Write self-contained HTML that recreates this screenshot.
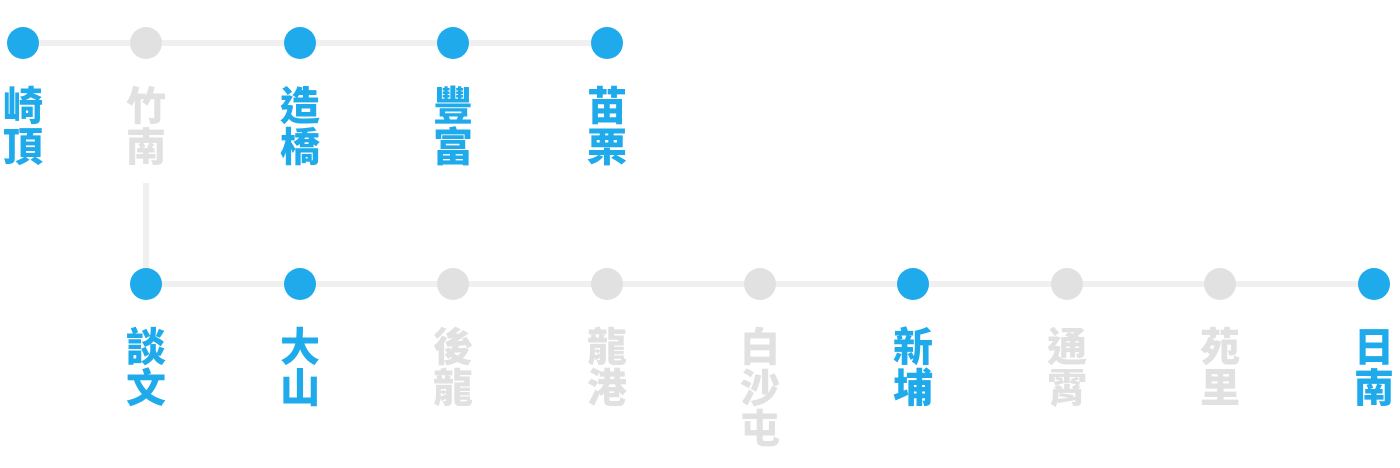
<!DOCTYPE html>
<html><head><meta charset="utf-8"><style>
body{margin:0;width:1400px;height:468px;background:#fff;position:relative;overflow:hidden;font-family:"Liberation Sans","Noto Sans CJK TC",sans-serif}
.l{position:absolute;background:#f0f0f0}
.d{position:absolute;width:32px;height:32px;border-radius:50%;margin:-16px 0 0 -16px}
.b{background:#1eaaeb;color:#1eaaeb}.g{background:#e1e1e1;color:#e1e1e1}
.t{position:absolute;width:60px;margin-left:-30px;text-align:center;font-size:40px;line-height:41px;font-weight:900;background:none}
</style></head><body>
<div class="l" style="left:23px;top:40px;width:584px;height:6px"></div>
<div class="l" style="left:143px;top:183px;width:6px;height:101px"></div>
<div class="l" style="left:146px;top:281px;width:1228px;height:6px"></div>

<div class="d b" style="left:23px;top:43px"></div>
<div class="d g" style="left:146px;top:43px"></div>
<div class="d b" style="left:300px;top:43px"></div>
<div class="d b" style="left:453px;top:43px"></div>
<div class="d b" style="left:607px;top:43px"></div>

<div class="t b" style="left:23px;top:87px;background:none">崎<br>頂</div>
<div class="t g" style="left:146px;top:87px;background:none">竹<br>南</div>
<div class="t b" style="left:300px;top:87px;background:none">造<br>橋</div>
<div class="t b" style="left:453px;top:87px;background:none">豐<br>富</div>
<div class="t b" style="left:607px;top:87px;background:none">苗<br>栗</div>

<div class="d b" style="left:146px;top:284px"></div>
<div class="d b" style="left:300px;top:284px"></div>
<div class="d g" style="left:453px;top:284px"></div>
<div class="d g" style="left:607px;top:284px"></div>
<div class="d g" style="left:760px;top:284px"></div>
<div class="d b" style="left:913px;top:284px"></div>
<div class="d g" style="left:1067px;top:284px"></div>
<div class="d g" style="left:1220px;top:284px"></div>
<div class="d b" style="left:1374px;top:284px"></div>

<div class="t b" style="left:146px;top:328px;background:none">談<br>文</div>
<div class="t b" style="left:300px;top:328px;background:none">大<br>山</div>
<div class="t g" style="left:453px;top:328px;background:none">後<br>龍</div>
<div class="t g" style="left:607px;top:328px;background:none">龍<br>港</div>
<div class="t g" style="left:760px;top:328px;background:none">白<br>沙<br>屯</div>
<div class="t b" style="left:913px;top:328px;background:none">新<br>埔</div>
<div class="t g" style="left:1067px;top:328px;background:none">通<br>霄</div>
<div class="t g" style="left:1220px;top:328px;background:none">苑<br>里</div>
<div class="t b" style="left:1374px;top:328px;background:none">日<br>南</div>
</body></html>
